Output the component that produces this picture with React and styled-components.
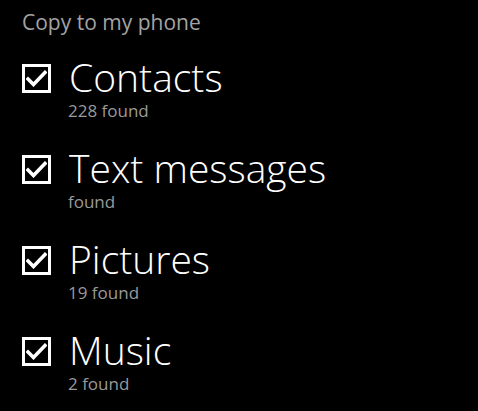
import React from "react";
import styled, { createGlobalStyle } from "styled-components";

const Global = createGlobalStyle`
  html, body { margin: 0; padding: 0; background: #000; }
  body { font-family: "Open Sans", "Noto Sans", sans-serif; color: #fff; }
`;

const Page = styled.div`
  width: 478px;
  height: 411px;
  background: #000;
  padding: 8px 0 0 22px;
  box-sizing: border-box;
  overflow: hidden;
`;

const Header = styled.div`
  font-size: 21px;
  font-weight: 400;
  color: #a3a3a3;
  line-height: 28px;
  margin-bottom: 19px;
`;

const List = styled.div`
  display: flex;
  flex-direction: column;
  gap: 23px;
`;

const Row = styled.div`
  display: flex;
  align-items: flex-start;
  gap: 18px;
`;

const Box = styled.div`
  width: 29px;
  height: 29px;
  box-sizing: border-box;
  border: 3px solid #fff;
  flex: none;
  display: flex;
  align-items: center;
  justify-content: center;
  margin-top: 9px;
`;

const Texts = styled.div`
  display: flex;
  flex-direction: column;
`;

const Title = styled.div`
  font-size: 39px;
  font-weight: 300;
  line-height: 44px;
  color: #fff;
`;

const Sub = styled.div`
  font-size: 17px;
  color: #9a9a9a;
  line-height: 24px;
  margin-left: -1px;
`;

const Check = () => (
  <svg width="21" height="17" viewBox="0 0 21 17">
    <path d="M2 9 L7.5 14.5 L19 2.5" fill="none" stroke="#fff" strokeWidth="3.6" strokeLinecap="square" />
  </svg>
);

const items = [
  { title: "Contacts", sub: "228 found" },
  { title: "Text messages", sub: "found" },
  { title: "Pictures", sub: "19 found" },
  { title: "Music", sub: "2 found" },
];

export default function App() {
  return (
    <>
      <Global />
      <Page>
        <Header>Copy to my phone</Header>
        <List>
          {items.map((it) => (
            <Row key={it.title}>
              <Box><Check /></Box>
              <Texts>
                <Title>{it.title}</Title>
                <Sub>{it.sub}</Sub>
              </Texts>
            </Row>
          ))}
        </List>
      </Page>
    </>
  );
}
